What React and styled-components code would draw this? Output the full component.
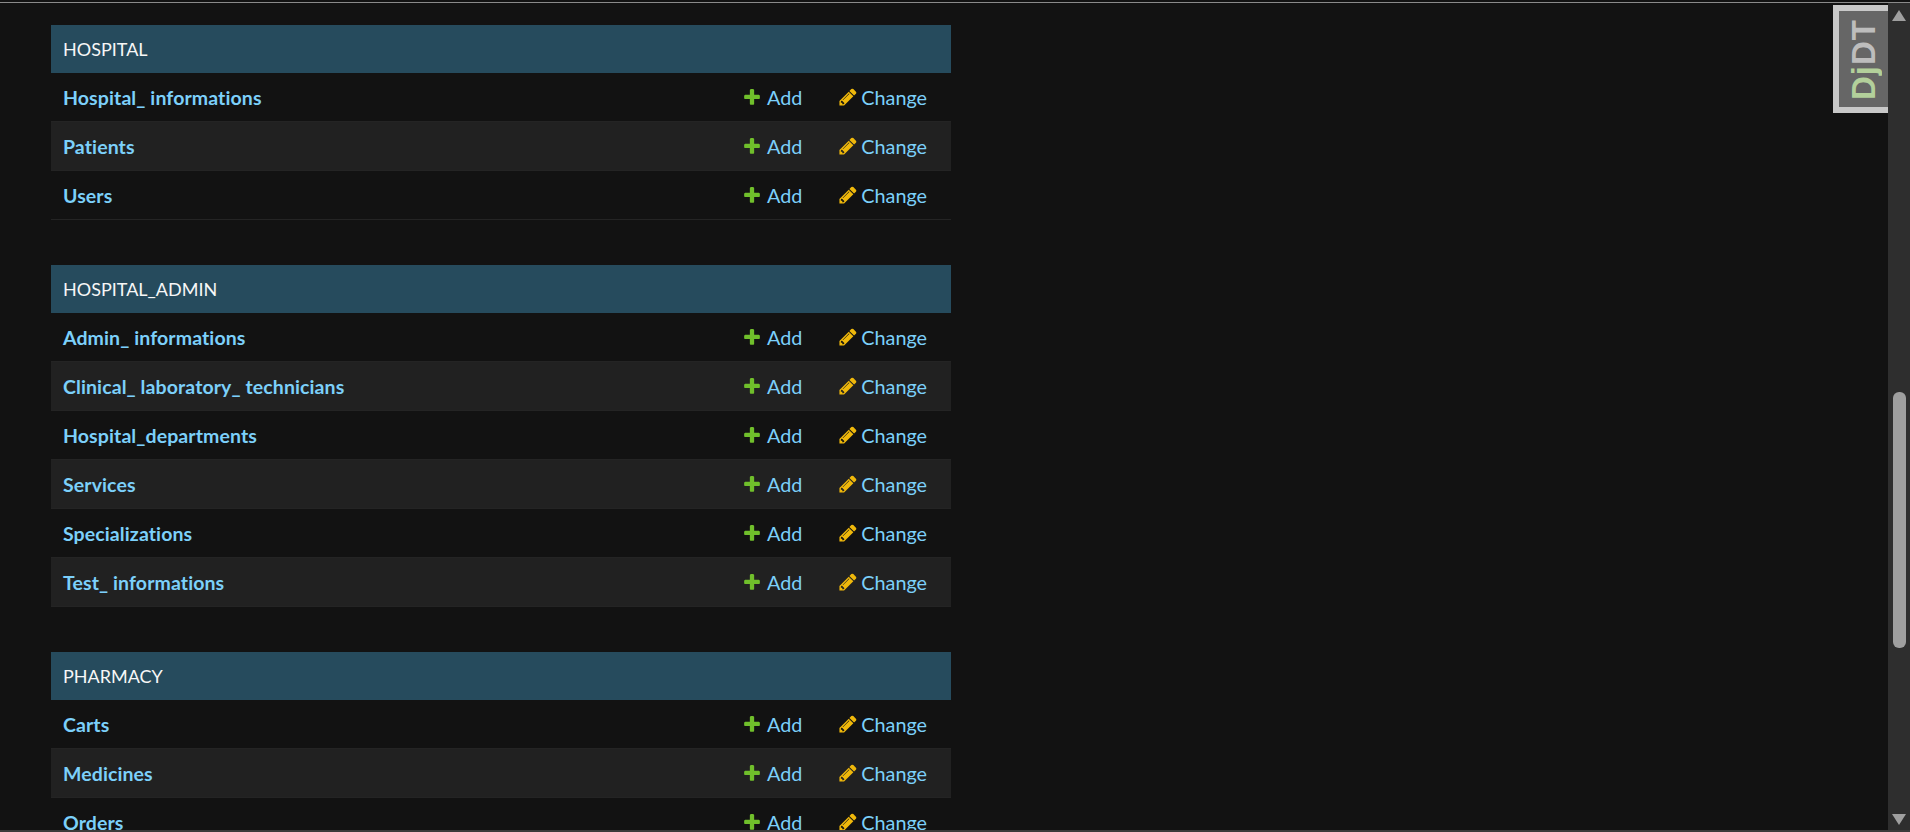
import React from 'react';
import styled, {createGlobalStyle} from 'styled-components';

const GlobalStyle = createGlobalStyle`
	html, body {
		margin: 0;
		padding: 0;
		height: 100%;
		overflow: hidden;
		background: #121212;
	}
`;

const Screen = styled.div`
	position: relative;
	display: flex;
	flex-direction: column;
	width: 1910px;
	height: 832px;
	overflow: hidden;
	background: #121212;
	font-family: "Lato", "Noto Sans", sans-serif;
	font-variant-ligatures: none;
`;
const TopLine = styled.div`
	flex: none;
	height: 2px;
	background: #121212;
	border-bottom: 1px solid #8a8a8a;
`;
const Middle = styled.div`
	flex: 1;
	min-height: 0;
	display: flex;
`;
const Content = styled.main`
	flex: 1;
	min-width: 0;
	overflow: hidden;
	padding: 22px 0 0 51px;
`;
const BottomLine = styled.div`
	flex: none;
	height: 2px;
	background: #3b3b3b;
`;
const Module = styled.section`
	width: 900px;
	margin-bottom: 45px;
`;
const Caption = styled.h2`
	margin: 0;
	height: 48px;
	padding: 0 12px;
	display: flex;
	align-items: center;
	background: #264b5d;
	color: #f7f7f7;
	font-size: 18px;
	font-weight: 400;
`;
const Row = styled.div`
	display: flex;
	align-items: center;
	height: 49px;
	box-sizing: border-box;
	padding: 0 24px 0 12px;
	background: ${props => (props.$alt ? '#212121' : '#121212')};
	border-bottom: 1px solid #242424;
`;
const ModelName = styled.a`
	flex: 1;
	color: #7cd0fa;
	font-size: 19.5px;
	font-weight: 700;
	letter-spacing: 0.1px;
`;
const Action = styled.a`
	display: flex;
	align-items: center;
	gap: ${props => props.$iconGap}px;
	color: #7cd0fa;
	font-size: 19.8px;
	margin-left: ${props => props.$gap}px;
`;
const Icon = styled.svg`
	width: 20px;
	height: 20px;
	flex: none;
`;
const Scrollbar = styled.aside`
	flex: none;
	width: 22px;
	display: flex;
	flex-direction: column;
	align-items: center;
	background: #2e2e2e;
`;
const Arrow = styled.svg`
	width: 14px;
	height: 11px;
	flex: none;
	margin: ${props => props.$margin};
`;
const Thumb = styled.div`
	flex: none;
	width: 13px;
	height: 256px;
	border-radius: 6px;
	background: #9f9f9f;
	margin: 371px 0 166px;
`;
const Handle = styled.div`
	position: absolute;
	top: 5px;
	right: 22px;
	width: 55px;
	height: 108px;
	box-sizing: border-box;
	border: 6px solid #c8c8c8;
	border-right: none;
	background: #666;
	display: flex;
	align-items: center;
	justify-content: center;
`;
const HandleText = styled.span`
	writing-mode: vertical-rl;
	transform: rotate(180deg);
	font-family: "Liberation Sans", sans-serif;
	font-weight: 700;
	font-size: 33px;
	line-height: 1;
	color: #bdbdbd;
	letter-spacing: 1px;
`;
const HandleAccent = styled.span`
	color: #b3d09b;
`;

const PlusIcon = () => (
	<Icon viewBox="0 0 1792 1792">
		<path
			fill="#70bf2b"
			d="M1600 796v192q0 40-28 68t-68 28h-416v416q0 40-28 68t-68 28h-192q-40 0-68-28t-28-68v-416h-416q-40 0-68-28t-28-68v-192q0-40 28-68t68-28h416v-416q0-40 28-68t68-28h192q40 0 68 28t28 68v416h416q40 0 68 28t28 68z"
		/>
	</Icon>
);
const PencilIcon = () => (
	<Icon viewBox="0 0 1792 1792">
		<path
			fill="#efb80b"
			d="M491 1536l91-91-235-235-91 91v107h128v128h107zm523-928q0-22-22-22-10 0-17 7l-542 542q-7 7-7 17 0 22 22 22 10 0 17-7l542-542q7-7 7-17zm-54-192l416 416-832 832h-416v-416zm683 96q0 53-37 90l-166 166-416-416 166-165q36-38 90-38 53 0 91 38l235 234q37 39 37 91z"
		/>
	</Icon>
);

const modules = [
	{title: 'HOSPITAL', models: ['Hospital_ informations', 'Patients', 'Users']},
	{
		title: 'HOSPITAL_ADMIN',
		models: [
			'Admin_ informations',
			'Clinical_ laboratory_ technicians',
			'Hospital_departments',
			'Services',
			'Specializations',
			'Test_ informations',
		],
	},
	{title: 'PHARMACY', models: ['Carts', 'Medicines', 'Orders']},
];

export default function App() {
	return (
		<Screen>
			<GlobalStyle />
			<TopLine />
			<Middle>
				<Content>
					{modules.map(module => (
						<Module key={module.title}>
							<Caption>{module.title}</Caption>
							{module.models.map((name, i) => (
								<Row key={name} $alt={i % 2 === 1}>
									<ModelName>{name}</ModelName>
									<Action $iconGap={5}>
										<PlusIcon />
										Add
									</Action>
									<Action $gap={36} $iconGap={3}>
										<PencilIcon />
										Change
									</Action>
								</Row>
							))}
						</Module>
					))}
				</Content>
				<Scrollbar>
					<Arrow viewBox="0 0 14 11" $margin="7px 0 0">
						<path fill="#9f9f9f" d="M7 0 14 11H0z" />
					</Arrow>
					<Thumb />
					<Arrow viewBox="0 0 14 11">
						<path fill="#9f9f9f" d="M0 0H14L7 11z" />
					</Arrow>
				</Scrollbar>
			</Middle>
			<BottomLine />
			<Handle>
				<HandleText>
					<HandleAccent>Dj</HandleAccent>DT
				</HandleText>
			</Handle>
		</Screen>
	);
}
